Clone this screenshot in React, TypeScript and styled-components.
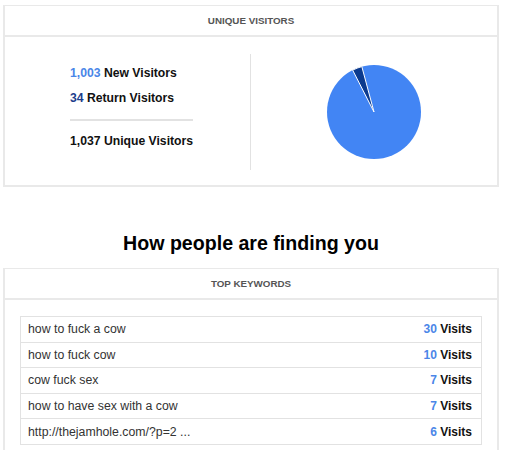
import React from "react";
import styled, { createGlobalStyle } from "styled-components";

const colors = {
  border: "#e9e9e9",
  divider: "#e2e2e2",
  blue: "#4a86e8",
  darkBlue: "#1c3d8c",
  pie: "#4285f4",
  pieDark: "#0b3a8e",
  text: "#111",
  keyword: "#333",
  header: "#555",
};

const GlobalStyle = createGlobalStyle`
  *, *::before, *::after {
    box-sizing: border-box;
  }
  body {
    margin: 0;
    background: #fff;
    font-family: "Liberation Sans", Arial, sans-serif;
  }
`;

const Page = styled.div`
  display: flex;
  flex-direction: column;
  padding: 5px 6px 0 3px;
`;

const Card = styled.section`
  border: 2px solid ${colors.border};
  border-top-width: 1px;
  background: #fff;
`;

const CardHeader = styled.div`
  height: 31px;
  display: flex;
  align-items: center;
  justify-content: center;
  border-bottom: 2px solid ${colors.border};
  font-size: 9.8px;
  font-weight: 700;
  color: ${colors.header};
  text-transform: uppercase;
`;

const VisitorsBody = styled.div`
  display: grid;
  grid-template-columns: 1fr 1fr;
  padding: 17px 0 15px;
`;

const StatsColumn = styled.div`
  border-right: 1px solid ${colors.divider};
  padding: 7px 0 0 65px;
  height: 116px;
`;

const StatsBlock = styled.div`
  width: fit-content;
  display: flex;
  flex-direction: column;
`;

const StatLine = styled.div`
  font-size: 12.2px;
  font-weight: 700;
  line-height: 25px;
  color: ${colors.text};
  white-space: nowrap;
`;

const Num = styled.span<{ $dark?: boolean }>`
  color: ${(p) => (p.$dark ? colors.darkBlue : colors.blue)};
`;

const StatDivider = styled.hr`
  border: none;
  border-top: 2px solid ${colors.divider};
  margin: 8px 0;
`;

const PieColumn = styled.div`
  display: flex;
  align-items: center;
  justify-content: center;
`;

const Heading = styled.h2`
  margin: 44px 0 13px;
  font-size: 19.6px;
  line-height: 24px;
  font-weight: 700;
  text-align: center;
  color: #000;
`;

const KeywordsBody = styled.div`
  padding: 16px 15px 17px 15px;
`;

const KeywordTable = styled.div`
  border: 1px solid ${colors.divider};
  border-bottom: none;
`;

const KeywordRow = styled.div`
  display: flex;
  align-items: center;
  justify-content: space-between;
  height: 25.6px;
  padding: 0 9px 0 7px;
  border-bottom: 1px solid ${colors.divider};
  font-size: 12.3px;
`;

const Keyword = styled.span`
  color: ${colors.keyword};
`;

const Visits = styled.span`
  font-weight: 700;
  font-size: 12px;
  color: ${colors.text};
`;

const Pie: React.FC = () => (
  <svg width="94" height="94" viewBox="0 0 94 94">
    <circle cx="47" cy="47" r="47" fill={colors.pie} />
    <path
      d="M47 47 L25.66 5.12 A47 47 0 0 1 34.84 1.6 Z"
      fill={colors.pieDark}
      stroke="#fff"
      strokeWidth="1"
    />
  </svg>
);

const keywords = [
  { term: "how to fuck a cow", visits: 30 },
  { term: "how to fuck cow", visits: 10 },
  { term: "cow fuck sex", visits: 7 },
  { term: "how to have sex with a cow", visits: 7 },
  { term: "http://thejamhole.com/?p=2 ...", visits: 6 },
];

export default function App() {
  return (
    <Page>
      <GlobalStyle />
      <Card>
        <CardHeader>Unique Visitors</CardHeader>
        <VisitorsBody>
          <StatsColumn>
            <StatsBlock>
              <StatLine>
                <Num>1,003</Num> New Visitors
              </StatLine>
              <StatLine>
                <Num $dark>34</Num> Return Visitors
              </StatLine>
              <StatDivider />
              <StatLine>1,037 Unique Visitors</StatLine>
            </StatsBlock>
          </StatsColumn>
          <PieColumn>
            <Pie />
          </PieColumn>
        </VisitorsBody>
      </Card>

      <Heading>How people are finding you</Heading>

      <Card>
        <CardHeader>Top Keywords</CardHeader>
        <KeywordsBody>
          <KeywordTable>
            {keywords.map((k) => (
              <KeywordRow key={k.term}>
                <Keyword>{k.term}</Keyword>
                <Visits>
                  <Num>{k.visits}</Num> Visits
                </Visits>
              </KeywordRow>
            ))}
          </KeywordTable>
        </KeywordsBody>
      </Card>
    </Page>
  );
}
